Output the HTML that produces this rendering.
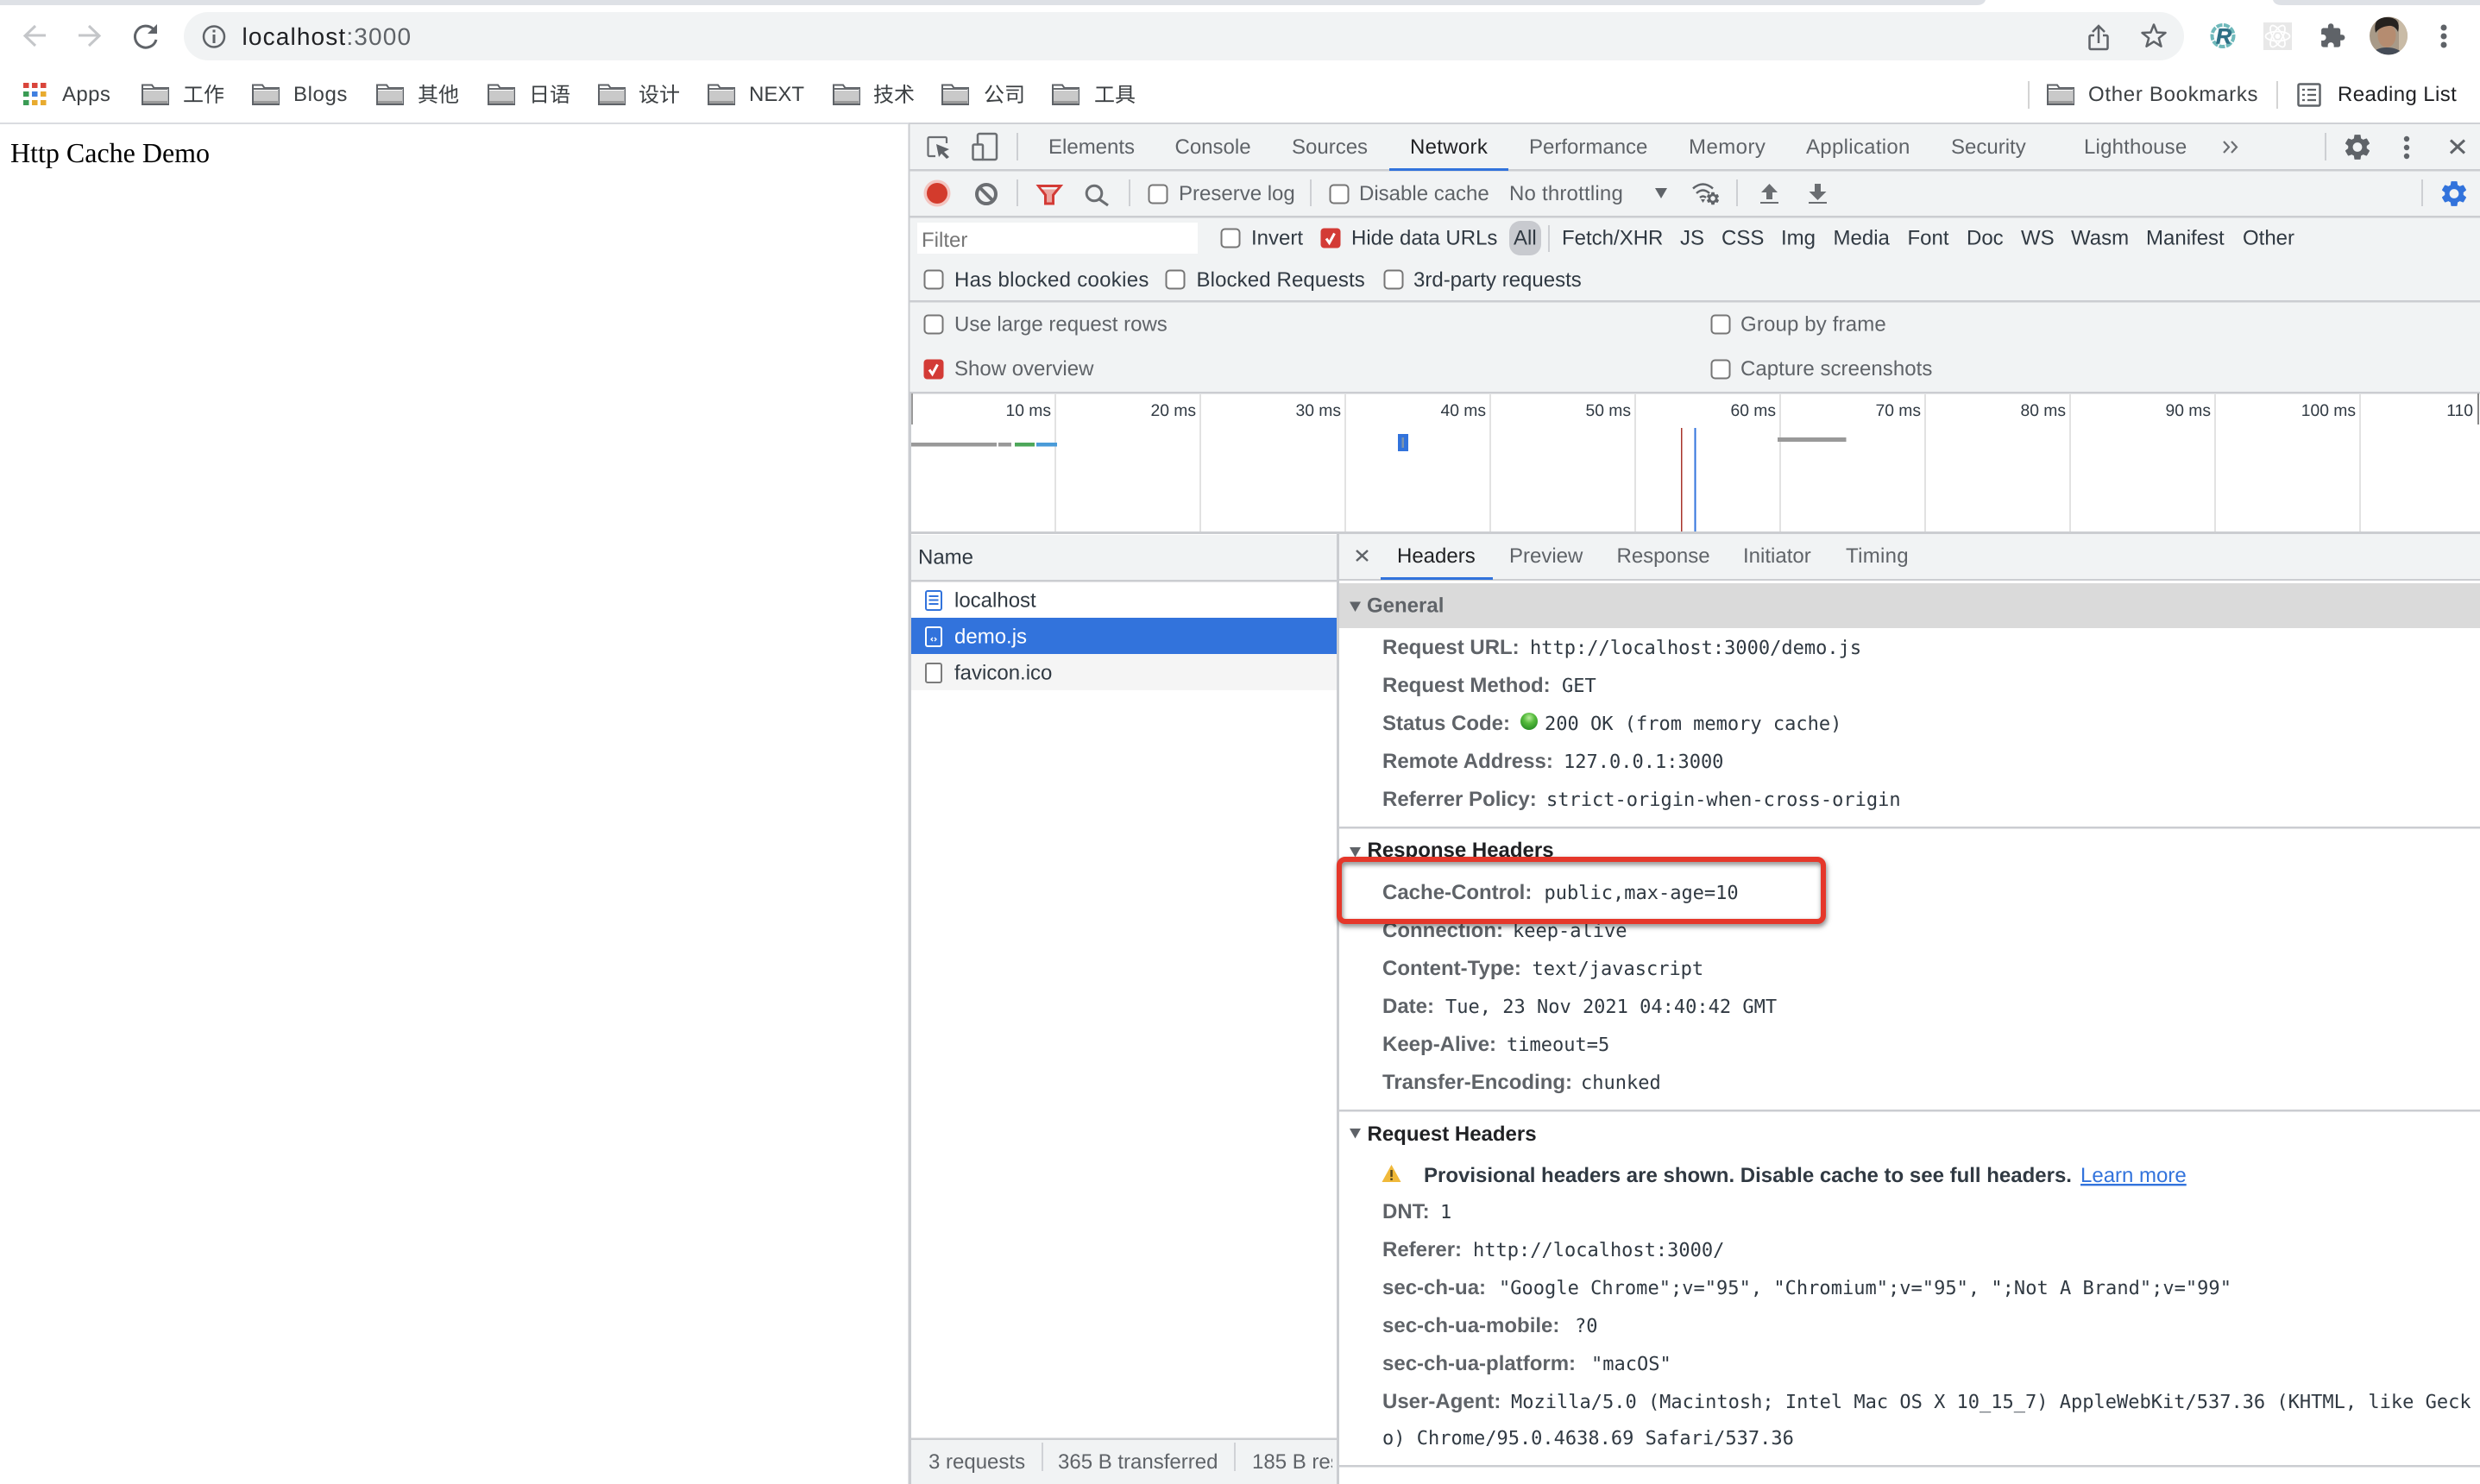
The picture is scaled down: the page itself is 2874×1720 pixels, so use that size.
<!DOCTYPE html>
<html lang="zh"><head><meta charset="utf-8"><title>localhost:3000</title>
<style>
html,body{margin:0;padding:0;width:2874px;height:1720px;overflow:hidden;background:#fff}
svg{display:block}
text{font-family:"Liberation Sans","Noto Sans CJK SC",sans-serif;font-size:24px;fill:#5f6368;white-space:pre;text-rendering:geometricPrecision}
.d{fill:#202124}.k{fill:#303942}.b{fill:#3c4043}
.h{font-weight:700}
.m{font-family:"DejaVu Sans Mono","Liberation Mono",monospace;font-size:22px;fill:#303942}
.o{font-size:19.300px;fill:#303942;text-anchor:end}
</style></head><body>
<svg xmlns="http://www.w3.org/2000/svg" width="2874" height="1720" viewBox="0 0 2874 1720">
<defs>
<symbol id="f" viewBox="0 0 32 25" width="32" height="25"><path d="M1 1.500h11l2.500 3.500h17v19H1z" fill="#fff" stroke="#5f6368" stroke-width="2"/><rect x="2" y="8" width="28" height="15" fill="#c9c9c9"/><rect x="2" y="5" width="28" height="2" fill="#6a6d71"/><rect x="2" y="20" width="28" height="3" fill="#9a9a9a"/></symbol>
<symbol id="c" viewBox="0 0 24 24" width="24" height="24"><rect x="1.500" y="1.500" width="21" height="21" rx="4" fill="#fff" stroke="#767676" stroke-width="2"/></symbol>
<symbol id="x" viewBox="0 0 24 24" width="24" height="24"><rect x="0.500" y="0.500" width="23" height="23" rx="4" fill="#d33b36"/><path d="M7 12.500l3.500 5 6-11" fill="none" stroke="#fff" stroke-width="3"/></symbol>
<path id="g" fill-rule="evenodd" d="M19.140 12.940c.04-.3.06-.61.06-.94 0-.32-.02-.64-.07-.94l2.030-1.580c.18-.14.23-.41.12-.61l-1.920-3.320c-.12-.22-.37-.29-.59-.22l-2.390.96c-.5-.38-1.030-.7-1.620-.94l-.36-2.540c-.04-.24-.24-.41-.48-.41h-3.840c-.24 0-.43.17-.47.41l-.36 2.540c-.59.24-1.130.57-1.620.94l-2.390-.96c-.22-.08-.47 0-.59.22L2.740 8.870c-.12.21-.08.47.12.61l2.030 1.580c-.05.3-.09.63-.09.94s.02.64.07.94l-2.030 1.580c-.18.14-.23.41-.12.61l1.920 3.320c.12.22.37.29.59.22l2.390-.96c.5.38 1.030.7 1.620.94l.36 2.540c.05.24.24.41.48.41h3.840c.24 0 .44-.17.47-.41l.36-2.540c.59-.24 1.130-.56 1.620-.94l2.390.96c.22.08.47 0 .59-.22l1.920-3.320c.12-.22.07-.47-.12-.61l-2.010-1.580zM12 15.600c-1.980 0-3.600-1.620-3.600-3.600s1.620-3.600 3.600-3.600 3.600 1.620 3.600 3.600-1.620 3.600-3.600 3.600z"/>
<radialGradient id="gd" cx="50%" cy="30%" r="65%"><stop offset="0" stop-color="#b8ec9c"/><stop offset=".5" stop-color="#55bb3c"/><stop offset="1" stop-color="#2f9428"/></radialGradient>
</defs>

<!-- browser chrome -->
<rect width="2874" height="143" fill="#fff"/>
<path d="M0 0H2301V0Q2299 6 2291 6H0Z" fill="#dee1e6"/>
<path d="M2634 0H2874V6H2644Q2636 6 2634 0Z" fill="#dee1e6"/>
<path d="M53 41H30M41 30L29 41.500L41 53" fill="none" stroke="#c4c6c9" stroke-width="3"/>
<path d="M91 41H114M103 30L115 41.500L103 53" fill="none" stroke="#c4c6c9" stroke-width="3"/>
<path d="M178 34A12.500 12.500 0 1 0 181 46" fill="none" stroke="#5f6368" stroke-width="3"/><path d="M182 28V39H171Z" fill="#5f6368"/>
<rect x="213" y="14" width="2318" height="56" rx="28" fill="#f1f3f4"/>
<circle cx="248" cy="42.500" r="12" fill="none" stroke="#5f6368" stroke-width="2.500"/><rect x="246.500" y="40" width="3" height="10" fill="#5f6368"/><rect x="246.500" y="34.500" width="3" height="3" fill="#5f6368"/>
<text x="280.500" y="52" style="font-size:28px;letter-spacing:1.150px"><tspan class="d">localhost</tspan><tspan>:3000</tspan></text>
<path d="M2432 30v20M2425 37l7-7 7 7" fill="none" stroke="#5f6368" stroke-width="2.500"/><path d="M2427 41h-4a1.500 1.500 0 0 0-1.500 1.500v13a1.500 1.500 0 0 0 1.500 1.500h18a1.500 1.500 0 0 0 1.500-1.500v-13a1.500 1.500 0 0 0-1.500-1.500h-4" fill="none" stroke="#5f6368" stroke-width="2.500"/>
<polygon points="2496,28.500 2499.600,37.600 2509.500,38 2501.800,44.200 2504.500,53.700 2496,48.300 2487.500,53.700 2490.200,44.200 2482.500,38 2492.400,37.600" fill="none" stroke="#5f6368" stroke-width="2.500" stroke-linejoin="round"/>
<circle cx="2576" cy="41.500" r="12.500" fill="none" stroke="#6fb9bb" stroke-width="4" stroke-dasharray="7 1.500"/>
<text x="2568" y="50.500" style="font-size:25px;font-weight:700;font-style:italic;fill:#2f7186;stroke:#2f7186;stroke-width:.6px">R</text>
<rect x="2623" y="26" width="33" height="32" fill="#e8e8e8"/>
<g fill="none" stroke="#fff" stroke-width="1.800"><ellipse cx="2639.500" cy="42" rx="14" ry="5.500"/><ellipse cx="2639.500" cy="42" rx="14" ry="5.500" transform="rotate(60 2639.500 42)"/><ellipse cx="2639.500" cy="42" rx="14" ry="5.500" transform="rotate(120 2639.500 42)"/></g><circle cx="2639.500" cy="42" r="3" fill="#fff"/>
<path transform="translate(2687.500 26) scale(1.300)" fill="#5f6368" d="M20.500 11H19V7c0-1.100-.9-2-2-2h-4V3.500C13 2.120 11.880 1 10.500 1S8 2.120 8 3.500V5H4c-1.100 0-1.990.9-1.990 2v3.800H3.500c1.490 0 2.700 1.210 2.700 2.700s-1.210 2.700-2.700 2.700H2V20c0 1.100.9 2 2 2h3.800v-1.500c0-1.490 1.210-2.700 2.700-2.700 1.490 0 2.700 1.210 2.700 2.700V22H17c1.100 0 2-.9 2-2v-4h1.500c1.380 0 2.500-1.120 2.500-2.500S21.880 11 20.500 11z"/>
<clipPath id="av"><ellipse cx="2768" cy="41.500" rx="22" ry="22"/></clipPath>
<g clip-path="url(#av)"><rect x="2746" y="19" width="44" height="45" fill="#a89a88"/><rect x="2780" y="19" width="10" height="45" fill="#c9bba6"/><ellipse cx="2766" cy="41" rx="10.500" ry="14" fill="#b58c70"/><path d="M2753 38Q2749 20 2766 20Q2783 20 2779 37Q2775 29 2768 30Q2758 31 2753 38Z" fill="#26221f"/><path d="M2748 64Q2752 55 2766 55Q2780 55 2786 64Z" fill="#454c57"/></g>
<circle cx="2832" cy="32" r="3.500" fill="#5f6368"/><circle cx="2832" cy="42" r="3.500" fill="#5f6368"/><circle cx="2832" cy="52" r="3.500" fill="#5f6368"/>

<!-- bookmarks -->
<g fill="#d9453b"><rect x="27" y="96" width="6.500" height="6"/><rect x="37" y="96" width="6.500" height="6"/><rect x="47" y="96" width="6.500" height="6"/></g>
<rect x="27" y="106" width="6.500" height="6" fill="#3a9b54"/><rect x="37" y="106" width="6.500" height="6" fill="#3f7fe0"/><rect x="47" y="106" width="6.500" height="6" fill="#e8ab2f"/>
<rect x="27" y="116" width="6.500" height="6" fill="#3a9b54"/><rect x="37" y="116" width="6.500" height="6" fill="#e8ab2f"/><rect x="47" y="116" width="6.500" height="6" fill="#e8ab2f"/>
<text class="b" x="72" y="117" style="letter-spacing:.4px">Apps</text>
<use href="#f" x="164" y="97"/><text class="b" x="212" y="118">工作</text>
<use href="#f" x="292" y="97"/><text class="b" x="340" y="117" style="letter-spacing:.6px">Blogs</text>
<use href="#f" x="436" y="97"/><text class="b" x="484" y="118">其他</text>
<use href="#f" x="565" y="97"/><text class="b" x="613" y="118">日语</text>
<use href="#f" x="693" y="97"/><text class="b" x="740" y="118">设计</text>
<use href="#f" x="820" y="97"/><text class="b" x="868" y="117">NEXT</text>
<use href="#f" x="965" y="97"/><text class="b" x="1012" y="118">技术</text>
<use href="#f" x="1091" y="97"/><text class="b" x="1140" y="118">公司</text>
<use href="#f" x="1219" y="97"/><text class="b" x="1268" y="118">工具</text>
<rect x="2350" y="94" width="2" height="32" fill="#d4d4d4"/><rect x="2638" y="94" width="2" height="32" fill="#d4d4d4"/>
<use href="#f" x="2372" y="97"/><text class="b" x="2420" y="117" style="letter-spacing:.7px">Other Bookmarks</text>
<rect x="2663.500" y="97.500" width="25" height="25" rx="1.500" fill="#fff" stroke="#5f6368" stroke-width="2.500"/>
<path d="M2668 104h3M2674 104h10M2668 110h3M2674 110h10M2668 116h3M2674 116h10" stroke="#5f6368" stroke-width="2.200"/>
<text class="d" x="2709" y="117" style="letter-spacing:.4px">Reading List</text>
<rect y="142" width="2874" height="2" fill="#dadce0"/>

<!-- page -->
<text x="12" y="188" style="font-family:'Liberation Serif',serif;font-size:32px;fill:#000">Http Cache Demo</text>

<!-- devtools -->
<rect x="1053" y="144" width="1821" height="1576" fill="#f1f3f4"/>
<rect x="1052.500" y="144" width="2" height="1576" fill="#cbcdd1"/>
<rect x="1053" y="142" width="1821" height="2" fill="#cfd1d5"/>
<rect x="1053" y="196" width="1821" height="2.500" fill="#cbcdd1"/>
<rect x="1053" y="250" width="1821" height="2.500" fill="#cbcdd1"/>
<rect x="1053" y="348" width="1821" height="2.500" fill="#cbcdd1"/>
<rect x="1053" y="454" width="1821" height="2.500" fill="#cbcdd1"/>

<!-- tab row -->
<path d="M1097 166V160.500a1.500 1.500 0 0 0-1.500-1.500H1077a1.500 1.500 0 0 0-1.500 1.500V179.500a1.500 1.500 0 0 0 1.500 1.500H1084" fill="none" stroke="#6b6e72" stroke-width="2.200"/>
<path d="M1085 167L1100 173L1094 176L1100 182L1097 184L1091 178L1088 182Z" fill="#5f6368"/>
<path d="M1133 167V157a2 2 0 0 1 2-2H1153a2 2 0 0 1 2 2V183a2 2 0 0 1-2 2H1138" fill="none" stroke="#6b6e72" stroke-width="2.500"/>
<rect x="1127.500" y="167.500" width="11.500" height="17.500" rx="1.500" fill="none" stroke="#6b6e72" stroke-width="2.500"/>
<rect x="1178" y="154" width="2" height="32" fill="#cdcfd3"/>
<text x="1215" y="178">Elements</text>
<text x="1361.500" y="178">Console</text>
<text x="1497" y="178">Sources</text>
<text class="d" x="1634" y="178" style="letter-spacing:.3px">Network</text>
<rect x="1610" y="195" width="138" height="3" fill="#3273dc"/>
<text x="1772" y="178">Performance</text>
<text x="1957" y="178" style="letter-spacing:.45px">Memory</text>
<text x="2093" y="178" style="letter-spacing:.3px">Application</text>
<text x="2261" y="178">Security</text>
<text x="2415" y="178" style="letter-spacing:.2px">Lighthouse</text>
<path d="M2577 164l6 6.500-6 6.500M2586 164l6 6.500-6 6.500" fill="none" stroke="#6b6e72" stroke-width="2.200"/>
<rect x="2694" y="154" width="2" height="32" fill="#cdcfd3"/>
<use href="#g" transform="translate(2714 152.500) scale(1.500)" fill="#5f6368"/>
<circle cx="2789" cy="161" r="3.200" fill="#5f6368"/><circle cx="2789" cy="171" r="3.200" fill="#5f6368"/><circle cx="2789" cy="181" r="3.200" fill="#5f6368"/>
<path d="M2840 162.500L2856 177.500M2856 162.500L2840 177.500" stroke="#5f6368" stroke-width="3"/>

<!-- toolbar -->
<circle cx="1086" cy="224" r="15.500" fill="#f3c5c0"/><circle cx="1086" cy="224" r="12" fill="#d33b2c"/>
<circle cx="1143" cy="225" r="11" fill="none" stroke="#6b6e72" stroke-width="4"/><path d="M1135.500 217.500L1150.500 232.500" stroke="#6b6e72" stroke-width="4"/>
<rect x="1178" y="208" width="2" height="31" fill="#cdcfd3"/>
<path d="M1203.500 215.500H1229L1220.500 226V236H1211.500V226Z" fill="#eba6a0" stroke="#d33b36" stroke-width="3"/>
<path d="M1206 217H1226L1224 219.500H1208Z" fill="#f1f3f4"/>
<circle cx="1268" cy="224" r="8.800" fill="none" stroke="#6b6e72" stroke-width="3"/><path d="M1274 231L1284 238" stroke="#6b6e72" stroke-width="3.200"/>
<rect x="1308" y="208" width="2" height="31" fill="#cdcfd3"/>
<use href="#c" x="1330" y="213"/>
<text x="1366" y="232">Preserve log</text>
<rect x="1518" y="208" width="2" height="31" fill="#cdcfd3"/>
<use href="#c" x="1540" y="213"/>
<text x="1575" y="232">Disable cache</text>
<text x="1749" y="232" style="letter-spacing:.2px">No throttling</text>
<path d="M1918 218H1932L1925 230Z" fill="#5f6368"/>
<path d="M1962 218.500Q1973.500 208.500 1985 218.500M1966 224Q1973.500 217 1981 224M1970 229Q1973.500 226 1977 229" fill="none" stroke="#5f6368" stroke-width="2.500"/><path d="M1971 231H1976L1973.500 235Z" fill="#5f6368"/>
<use href="#g" transform="translate(1976 221) scale(.75)" fill="#5f6368"/>
<rect x="2012" y="208" width="2" height="31" fill="#cdcfd3"/>
<path d="M2050.500 213L2060 223H2054V231H2047V223H2041Z" fill="#6b6e72"/><rect x="2040" y="234" width="21" height="2" fill="#6b6e72"/>
<path d="M2103 213H2110V222H2116.500L2106.500 232L2096.500 222H2103Z" fill="#6b6e72"/><rect x="2096" y="234" width="21" height="2" fill="#6b6e72"/>
<rect x="2806" y="208" width="2" height="31" fill="#cdcfd3"/>
<use href="#g" transform="translate(2826 206.500) scale(1.500)" fill="#3273dc"/>

<!-- filter row -->
<rect x="1063" y="258" width="325" height="36" fill="#fff"/>
<text x="1068" y="286" style="fill:#757575">Filter</text>
<use href="#c" x="1414" y="264"/><text class="k" x="1450" y="283.500">Invert</text>
<use href="#x" x="1530" y="264"/><text class="k" x="1566" y="283.500">Hide data URLs</text>
<rect x="1749" y="256" width="37" height="40" rx="13" fill="#c8cacf"/><text class="k" x="1754" y="283.500">All</text>
<rect x="1794" y="261" width="2" height="31" fill="#cdcfd3"/>
<text class="k" x="1810" y="283.500">Fetch/XHR</text>
<text class="k" x="1947" y="283.500">JS</text>
<text class="k" x="1995" y="283.500">CSS</text>
<text class="k" x="2064" y="283.500">Img</text>
<text class="k" x="2124.500" y="283.500">Media</text>
<text class="k" x="2210.500" y="283.500">Font</text>
<text class="k" x="2279" y="283.500">Doc</text>
<text class="k" x="2342" y="283.500">WS</text>
<text class="k" x="2400" y="283.500">Wasm</text>
<text class="k" x="2487" y="283.500">Manifest</text>
<text class="k" x="2599" y="283.500">Other</text>

<use href="#c" x="1070" y="312"/><text class="k" x="1106" y="332" style="letter-spacing:.29px">Has blocked cookies</text>
<use href="#c" x="1350" y="312"/><text class="k" x="1386.500" y="332" style="letter-spacing:.12px">Blocked Requests</text>
<use href="#c" x="1603" y="312"/><text class="k" x="1638" y="332">3rd-party requests</text>

<use href="#c" x="1070" y="364"/><text x="1106" y="383.500">Use large request rows</text>
<use href="#x" x="1070" y="416"/><text x="1106" y="435">Show overview</text>
<use href="#c" x="1982" y="364"/><text x="2017" y="383.500" style="letter-spacing:.15px">Group by frame</text>
<use href="#c" x="1982" y="416"/><text x="2017" y="435" style="letter-spacing:.05px">Capture screenshots</text>

<!-- overview -->
<rect x="1055" y="456.500" width="1819" height="160" fill="#fff"/>
<g fill="#e2e2e2"><rect x="1222" y="457" width="2" height="160"/><rect x="1390" y="457" width="2" height="160"/><rect x="1558" y="457" width="2" height="160"/><rect x="1726" y="457" width="2" height="160"/><rect x="1894" y="457" width="2" height="160"/><rect x="2062" y="457" width="2" height="160"/><rect x="2230" y="457" width="2" height="160"/><rect x="2398" y="457" width="2" height="160"/><rect x="2566" y="457" width="2" height="160"/><rect x="2734" y="457" width="2" height="160"/></g>
<text class="o" x="1218" y="482">10 ms</text><text class="o" x="1386" y="482">20 ms</text><text class="o" x="1554" y="482">30 ms</text><text class="o" x="1722" y="482">40 ms</text><text class="o" x="1890" y="482">50 ms</text><text class="o" x="2058" y="482">60 ms</text><text class="o" x="2226" y="482">70 ms</text><text class="o" x="2394" y="482">80 ms</text><text class="o" x="2562" y="482">90 ms</text><text class="o" x="2730" y="482">100 ms</text><text class="o" x="2866" y="482">110</text>
<rect x="1054" y="456" width="4" height="36" fill="#9a9a9a"/><rect x="2871" y="456" width="2" height="36" fill="#888"/>
<rect x="1055" y="513" width="100" height="4.500" fill="#999"/><rect x="1157" y="513" width="15" height="4.500" fill="#999"/><rect x="1176" y="513" width="23" height="4.500" fill="#4da75a"/><rect x="1201" y="513" width="24" height="4.500" fill="#4a9bd8"/>
<rect x="1620" y="503" width="12" height="20" fill="#3273dc"/><rect x="1624.500" y="507" width="2.500" height="12" fill="#7c94ad"/>
<rect x="2060" y="507" width="79.500" height="5" fill="#999"/>
<rect x="1948" y="496" width="1.500" height="121" fill="#a8342b"/><rect x="1963.500" y="496" width="2" height="121" fill="#3273dc"/>
<rect x="1053" y="616" width="1821" height="3" fill="#cbcdd1"/>

<!-- request list -->
<rect x="1055" y="619" width="494" height="1048" fill="#fff"/>
<rect x="1053" y="456" width="3" height="1264" fill="#cbcdd1"/>
<rect x="1056" y="620" width="493" height="52" fill="#f1f3f4"/>
<rect x="1056" y="672" width="493" height="2.500" fill="#cbcdd1"/>
<text class="k" x="1064" y="653.500">Name</text>
<rect x="1056" y="758" width="493" height="42" fill="#f5f5f5"/>
<rect x="1056" y="716" width="493" height="42" fill="#3273dc"/>
<rect x="1073" y="685" width="18" height="22" rx="2" fill="#fff" stroke="#3273dc" stroke-width="2"/><path d="M1076.500 691h11M1076.500 695.500h11M1076.500 700h11" stroke="#3273dc" stroke-width="2"/>
<text class="k" x="1106" y="703.500">localhost</text>
<rect x="1073" y="727" width="18" height="22" rx="2" fill="none" stroke="#fff" stroke-width="2"/><path d="M1081 739l-2 2 2 2M1083 739l2 2-2 2" fill="none" stroke="#fff" stroke-width="1.300"/>
<text x="1106" y="745.500" style="fill:#fff">demo.js</text>
<rect x="1073" y="769" width="18" height="22" rx="2" fill="#fff" stroke="#7b7b7b" stroke-width="2"/>
<text class="k" x="1106" y="787.500">favicon.ico</text>

<!-- status bar -->
<rect x="1056" y="1667" width="493" height="53" fill="#f1f3f4"/>
<rect x="1056" y="1666.500" width="493" height="2.500" fill="#cbcdd1"/>
<svg x="1056" y="1669" width="488" height="51"><text x="20" y="33">3 requests</text><rect x="151" y="3" width="2" height="33" fill="#d0d2d6"/><text x="170" y="33">365 B transferred</text><rect x="374" y="3" width="2" height="33" fill="#d0d2d6"/><text x="395" y="33">185 B resources</text></svg>

<!-- details -->
<rect x="1551" y="619" width="1323" height="1101" fill="#fff"/>
<rect x="1549" y="619" width="3" height="1101" fill="#cbcdd1"/>
<rect x="1552" y="619" width="1322" height="52" fill="#f1f3f4"/>
<rect x="1552" y="671" width="1322" height="2" fill="#cbcdd1"/>
<rect x="1600" y="669" width="130" height="3" fill="#3273dc"/>
<path d="M1572 638L1585 650M1585 638L1572 650" stroke="#5f6368" stroke-width="2.500"/>
<text class="d" x="1619" y="652">Headers</text>
<text x="1749" y="652">Preview</text>
<text x="1873.500" y="652">Response</text>
<text x="2020" y="652">Initiator</text>
<text x="2139" y="652" style="letter-spacing:.3px">Timing</text>

<rect x="1552" y="676" width="1322" height="52" fill="#dadada"/>
<path d="M1564 697.500H1577L1570.500 709Z" fill="#5f6368"/>
<text class="h" x="1584" y="709.500">General</text>
<text class="h" x="1602" y="758">Request URL:</text><text class="m" x="1773" y="758">http://localhost:3000/demo.js</text>
<text class="h" x="1602" y="802">Request Method:</text><text class="m" x="1810" y="802">GET</text>
<text class="h" x="1602" y="846">Status Code:</text><circle cx="1772" cy="836" r="10" fill="url(#gd)"/><text class="m" x="1790" y="846">200 OK (from memory cache)</text>
<text class="h" x="1602" y="890">Remote Address:</text><text class="m" x="1812" y="890">127.0.0.1:3000</text>
<text class="h" x="1602" y="934">Referrer Policy:</text><text class="m" x="1792" y="934">strict-origin-when-cross-origin</text>
<rect x="1552" y="958" width="1322" height="2.500" fill="#cbcdd1"/>

<path d="M1564 982H1577L1570.500 993.500Z" fill="#5f6368"/>
<text class="h k" x="1584.500" y="993" style="fill:#202124">Response Headers</text>
<text class="h" x="1602" y="1042">Cache-Control:</text><text class="m" x="1789.500" y="1042">public,max-age=10</text>
<text class="h" x="1602" y="1086">Connection:</text><text class="m" x="1753" y="1086">keep-alive</text>
<text class="h" x="1602" y="1130">Content-Type:</text><text class="m" x="1775.500" y="1130">text/javascript</text>
<text class="h" x="1602" y="1174">Date:</text><text class="m" x="1675" y="1174">Tue, 23 Nov 2021 04:40:42 GMT</text>
<text class="h" x="1602" y="1218">Keep-Alive:</text><text class="m" x="1746" y="1218">timeout=5</text>
<text class="h" x="1602" y="1262">Transfer-Encoding:</text><text class="m" x="1832" y="1262">chunked</text>
<rect x="1552" y="1286" width="1322" height="2.500" fill="#cbcdd1"/>

<path d="M1564 1308H1577L1570.500 1319.500Z" fill="#5f6368"/>
<text class="h" x="1584.500" y="1322" style="fill:#202124">Request Headers</text>
<path d="M1612.500 1350L1623.500 1370H1601.500Z" fill="#f0b93a"/><rect x="1611.300" y="1356" width="2.500" height="8" fill="#5a4a1e"/><rect x="1611.300" y="1365.500" width="2.500" height="2.500" fill="#5a4a1e"/>
<text class="h k" x="1650" y="1370">Provisional headers are shown. Disable cache to see full headers.</text>
<text x="2411" y="1370" style="fill:#3273dc;text-decoration:underline">Learn more</text>
<text class="h" x="1602" y="1412">DNT:</text><text class="m" x="1669" y="1412">1</text>
<text class="h" x="1602" y="1456">Referer:</text><text class="m" x="1707" y="1456">http://localhost:3000/</text>
<text class="h" x="1602" y="1500">sec-ch-ua:</text><text class="m" x="1737" y="1500" style="letter-spacing:.02px">"Google Chrome";v="95", "Chromium";v="95", ";Not A Brand";v="99"</text>
<text class="h" x="1602" y="1544">sec-ch-ua-mobile:</text><text class="m" x="1825" y="1544">?0</text>
<text class="h" x="1602" y="1588">sec-ch-ua-platform:</text><text class="m" x="1844" y="1588">"macOS"</text>
<text class="h" x="1602" y="1632">User-Agent:</text><text class="m" x="1751" y="1632">Mozilla/5.0 (Macintosh; Intel Mac OS X 10_15_7) AppleWebKit/537.36 (KHTML, like Geck</text>
<text class="m" x="1602" y="1674">o) Chrome/95.0.4638.69 Safari/537.36</text>
<rect x="1552" y="1698" width="1322" height="2.500" fill="#cbcdd1"/>

<rect x="1552" y="996" width="561" height="72" rx="7" fill="none" stroke="#e5372a" stroke-width="6" style="filter:drop-shadow(1px 3px 3px rgba(0,0,0,.5))"/>
</svg>
</body></html>
